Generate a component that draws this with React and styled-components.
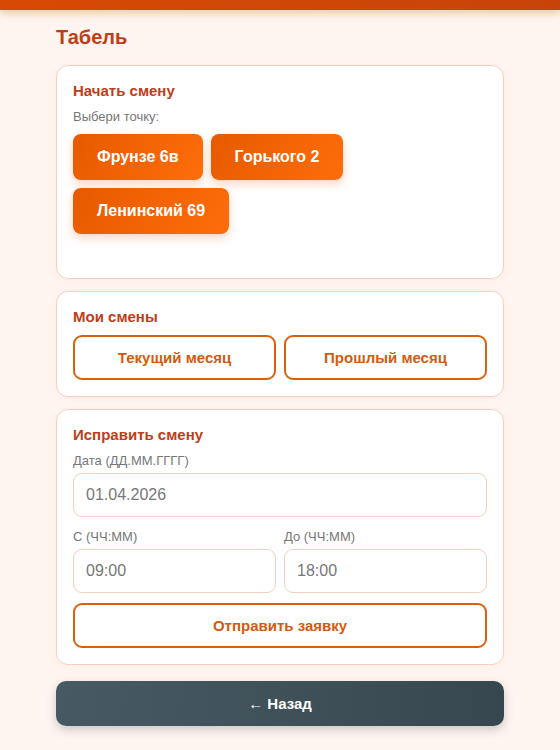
import React from 'react';
import styled, { createGlobalStyle } from 'styled-components';

const GlobalStyle = createGlobalStyle`
  html, body {
    margin: 0;
    padding: 0;
    background: #fff5f0;
    font-family: "Liberation Sans", Arial, sans-serif;
  }
`;

const TopBar = styled.div`
  height: 10px;
  background: linear-gradient(90deg, #d84a04, #c8430a);
  box-shadow: 0 3px 8px rgba(200, 70, 10, 0.3);
`;

const Page = styled.div`
  width: 448px;
  margin: 0 auto;
  padding: 14px 0 24px;
  display: flex;
  flex-direction: column;
`;

const Title = styled.h1`
  margin: 0 0 15px;
  font-size: 20px;
  font-weight: 700;
  color: #bf3d17;
  line-height: 26px;
`;

const Card = styled.section`
  background: #fff;
  border: 1px solid #f6cfc0;
  border-radius: 12px;
  padding: 16px;
  margin-bottom: 12px;
  box-shadow: 0 2px 8px rgba(230, 120, 80, 0.06);
`;

const CardTitle = styled.h2`
  margin: 0 0 9px;
  font-size: 15px;
  font-weight: 700;
  color: #bf3d17;
  line-height: 18px;
`;

const Hint = styled.div`
  font-size: 13px;
  color: #777;
  margin-bottom: 9px;
  line-height: 16px;
`;

const Points = styled.div`
  display: flex;
  flex-wrap: wrap;
  gap: 8px;
  margin-bottom: 28px;
`;

const PointButton = styled.button`
  height: 46px;
  padding: 0 24px;
  border: none;
  border-radius: 8px;
  background: linear-gradient(120deg, #e65a00, #ff6d0a);
  color: #fff;
  font-family: inherit;
  font-size: 16px;
  font-weight: 700;
  box-shadow: 0 4px 10px rgba(240, 100, 20, 0.28);
  cursor: pointer;
`;

const Row = styled.div`
  display: grid;
  grid-template-columns: 1fr 1fr;
  gap: 8px;
`;

const OutlineButton = styled.button`
  width: 100%;
  height: 45px;
  background: #fff;
  border: 2px solid #d9600f;
  border-radius: 9px;
  color: #d45a10;
  font-family: inherit;
  font-size: 15px;
  font-weight: 700;
  cursor: pointer;
  margin-top: ${p => p.$mt || 0}px;
`;

const Field = styled.label`
  display: flex;
  flex-direction: column;
  margin-bottom: ${p => p.$mb || 0}px;
`;

const Label = styled.span`
  font-size: 13px;
  color: #777;
  line-height: 16px;
  margin-bottom: 4px;
`;

const Input = styled.input`
  box-sizing: border-box;
  height: 44px;
  width: 100%;
  padding: 0 12px;
  border: 1px solid #f4cfc2;
  border-radius: 9px;
  font-family: inherit;
  font-size: 16px;
  color: #777;
  background: #fff;
  outline: none;
`;

const BackButton = styled.button`
  height: 45px;
  margin-top: 4px;
  border: none;
  border-radius: 10px;
  background: linear-gradient(100deg, #475a63, #37474f);
  color: #fff;
  font-family: inherit;
  font-size: 15px;
  font-weight: 700;
  box-shadow: 0 4px 10px rgba(55, 71, 79, 0.25);
  cursor: pointer;
`;

export default function App() {
  return (
    <>
      <GlobalStyle />
      <TopBar />
      <Page>
        <Title>Табель</Title>

        <Card>
          <CardTitle>Начать смену</CardTitle>
          <Hint>Выбери точку:</Hint>
          <Points>
            <PointButton>Фрунзе 6в</PointButton>
            <PointButton>Горького 2</PointButton>
            <PointButton>Ленинский 69</PointButton>
          </Points>
        </Card>

        <Card>
          <CardTitle>Мои смены</CardTitle>
          <Row>
            <OutlineButton>Текущий месяц</OutlineButton>
            <OutlineButton>Прошлый месяц</OutlineButton>
          </Row>
        </Card>

        <Card>
          <CardTitle>Исправить смену</CardTitle>
          <Field $mb={12}>
            <Label>Дата (ДД.ММ.ГГГГ)</Label>
            <Input defaultValue="01.04.2026" />
          </Field>
          <Row>
            <Field>
              <Label>С (ЧЧ:ММ)</Label>
              <Input defaultValue="09:00" />
            </Field>
            <Field>
              <Label>До (ЧЧ:ММ)</Label>
              <Input defaultValue="18:00" />
            </Field>
          </Row>
          <OutlineButton $mt={10}>Отправить заявку</OutlineButton>
        </Card>

        <BackButton>← Назад</BackButton>
      </Page>
    </>
  );
}
